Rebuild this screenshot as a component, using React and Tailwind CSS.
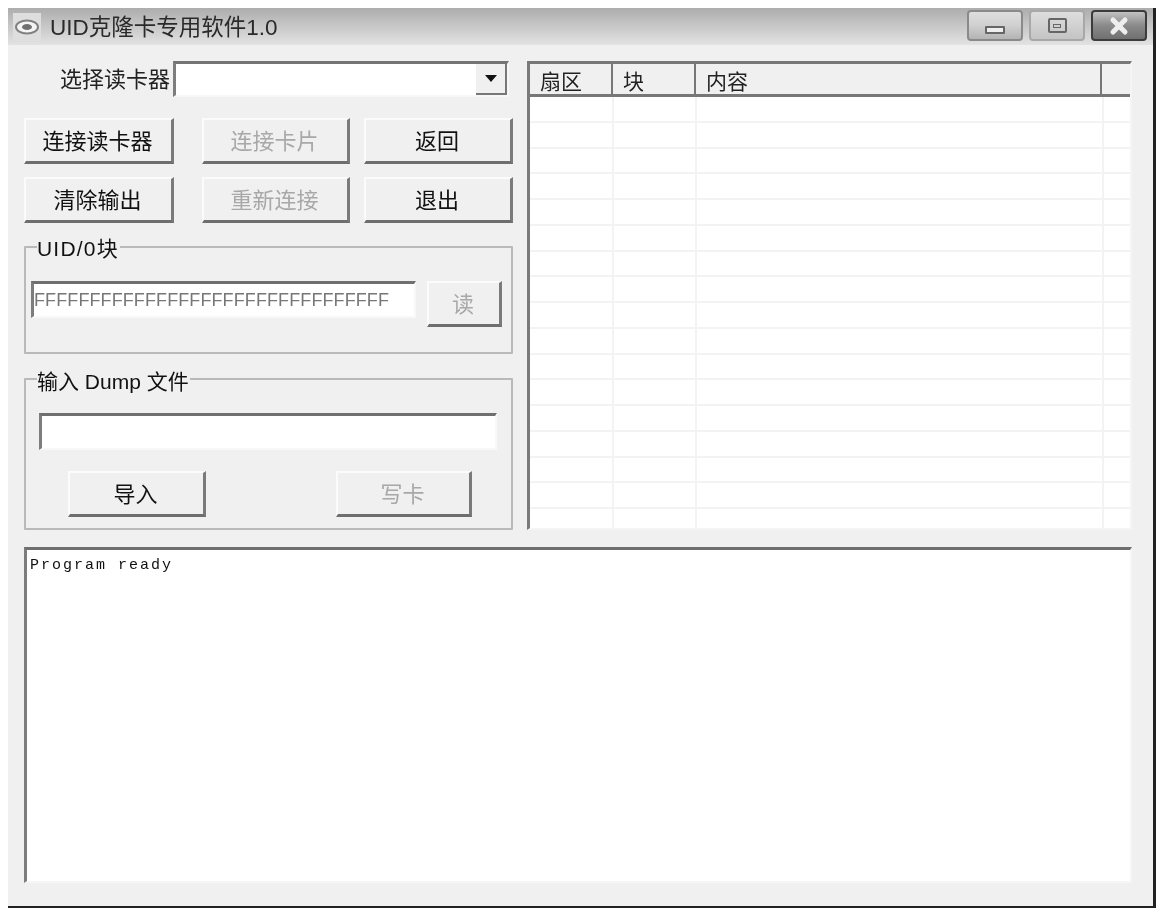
import { X } from 'lucide-react'

const FONT = '"Liberation Sans", "Noto Sans CJK SC", sans-serif'
const ROWS = Array.from({ length: 17 })

function Btn({ w, h = 'h-[46px]', off, children }) {
  return (
    <button className={`${w} ${h} flex items-center justify-center pt-[3px] pr-[2px] bg-[#f0f0f0] border-t-2 border-l-2 border-t-[#fbfbfb] border-l-[#fbfbfb] border-r-[3px] border-b-[3px] border-r-[#7a7a7a] border-b-[#6e6e6e] text-[22px] leading-none ${off ? 'text-[#a8a8a8]' : 'text-[#111]'}`}>
      {children}
    </button>
  )
}

function Group({ title, h, legend, children }) {
  return (
    <div className={`relative ${h} border-2 border-[#b9b9b9] rounded-[1px]`}>
      <span className={`absolute left-[11px] pr-[1px] bg-[#f0f0f0] text-[21px] leading-[26px] text-[#111] whitespace-nowrap ${legend}`}>{title}</span>
      {children}
    </div>
  )
}

function Field({ w, children }) {
  return (
    <div className={`${w} h-[37px] bg-white border-t-[3px] border-l-[3px] border-t-[#6f6f6f] border-l-[#7d7d7d] border-r-2 border-b-2 border-r-[#f8f8f8] border-b-[#f8f8f8] text-[18px] tracking-[0.1px] leading-[32px] text-[#777] whitespace-nowrap overflow-hidden`}>
      {children}
    </div>
  )
}

function Cap({ children, tone }) {
  return (
    <div className={`w-[56px] h-[31px] rounded-[4px] border-2 flex items-center justify-center ${tone}`}>
      {children}
    </div>
  )
}

export default function App() {
  return (
    <div className="w-[1161px] h-[915px] bg-white pl-[8px] pt-[8px]" style={{ fontFamily: FONT }}>
      <div className="w-[1148px] h-[900px] flex flex-col bg-[#f0f0f0] border-r-[3px] border-r-[#222] border-b-[2px] border-b-[#222] blur-[0.4px]">
        {/* title bar */}
        <div className="h-[37px] shrink-0 flex items-center bg-gradient-to-b from-[#adadad] to-[#e3e3e3] pl-[5px] pr-[6px]">
          <svg width="28" height="28" viewBox="0 0 28 28">
            <rect x="0" y="0" width="28" height="28" fill="#dedede" />
            <ellipse cx="14" cy="14" rx="11" ry="6.5" fill="#f4f4f4" stroke="#808080" strokeWidth="2" />
            <ellipse cx="14" cy="14" rx="5" ry="3" fill="#707070" />
          </svg>
          <span className="ml-[9px] pt-[2px] text-[22.5px] text-[#2a2a2a] whitespace-nowrap">UID克隆卡专用软件1.0</span>
          <div className="ml-auto flex gap-[6px] pb-[2px]">
            <Cap tone="border-[#8a8a8a] bg-gradient-to-b from-[#dedede] via-[#d0d0d0] to-[#b4b4b4]">
              <div className="mt-[9px] w-[20px] h-[8px] rounded-[1px] bg-[#eee] border-2 border-[#666]" />
            </Cap>
            <Cap tone="border-[#a8a8a8] bg-gradient-to-b from-[#dedede] to-[#c4c4c4]">
              <div className="w-[19px] h-[15px] border-2 border-[#666] rounded-[2px] flex items-center justify-center"><div className="w-[8px] h-[4px] border border-[#666]" /></div>
            </Cap>
            <Cap tone="border-[#3c3c3c] bg-gradient-to-b from-[#c2c2c2] via-[#8a8a8a] to-[#707070]">
              <X size={24} strokeWidth={5} className="text-[#eee]" />
            </Cap>
          </div>
        </div>

        {/* main */}
        <div className="flex-1 pl-[16px] pt-[16px]">
          <div className="flex">
            <div className="w-[489px] shrink-0">
              {/* reader picker */}
              <div className="flex h-[36px] items-center">
                <span className="w-[149px] pr-[3px] text-right text-[22px] text-[#222] whitespace-nowrap">选择读卡器</span>
                <div className="w-[336px] h-[36px] flex justify-end bg-white border-t-[3px] border-l-[3px] border-t-[#747474] border-l-[#7d7d7d] border-r-2 border-b-2 border-r-[#f7f7f7] border-b-[#f7f7f7]">
                  <div className="w-[31px] flex items-center justify-center bg-[#f0f0f0] border-r-[2px] border-b-[2px] border-r-[#777] border-b-[#777]">
                    <div className="w-0 h-0 border-x-[6px] border-x-transparent border-t-[7px] border-t-[#111]" />
                  </div>
                </div>
              </div>

              {/* buttons */}
              <div className="mt-[21px] grid grid-cols-[150px_148px_149px] gap-y-[13px]">
                <Btn w="w-full">连接读卡器</Btn>
                <Btn w="w-full ml-[28px]" off>连接卡片</Btn>
                <Btn w="w-full ml-[42px]">返回</Btn>
                <Btn w="w-full">清除输出</Btn>
                <Btn w="w-full ml-[28px]" off>重新连接</Btn>
                <Btn w="w-full ml-[42px]">退出</Btn>
              </div>

              {/* uid */}
              <div className="mt-[23px]">
                <Group title="UID/0块" h="h-[108px]" legend="-top-[12px] tracking-[1.2px]">
                  <div className="flex pt-[33px] pl-[5px] gap-[11px]">
                    <Field w="w-[385px]">FFFFFFFFFFFFFFFFFFFFFFFFFFFFFFFF</Field>
                    <Btn w="w-[75px]" off>读</Btn>
                  </div>
                </Group>
              </div>

              {/* dump */}
              <div className="mt-[24px]">
                <Group title="输入 Dump 文件" h="h-[152px]" legend="-top-[11px]">
                  <div className="pt-[33px] pl-[13px]">
                    <Field w="w-[458px]" />
                    <div className="flex mt-[21px] pl-[29px] gap-[130px]">
                      <Btn w="w-[138px]">导入</Btn>
                      <Btn w="w-[136px]" off>写卡</Btn>
                    </div>
                  </div>
                </Group>
              </div>
            </div>

            {/* sector table */}
            <div className="ml-[14px] w-[605px] h-[469px] overflow-hidden bg-white border-l-[3px] border-t-[3px] border-l-[#7a7a7a] border-t-[#777] border-r-2 border-b-2 border-r-[#f5f5f5] border-b-[#f5f5f5]">
              <div className="flex h-[33px] bg-[#f0f0f0] border-b-[3px] border-b-[#777] text-[21px] leading-[36px] text-[#222]">
                <div className="w-[83px] pl-[10px] border-r-2 border-r-[#777]">扇区</div>
                <div className="w-[83px] pl-[10px] border-r-2 border-r-[#777]">块</div>
                <div className="w-[406px] pl-[10px] border-r-2 border-r-[#777]">内容</div>
                <div className="flex-1" />
              </div>
              {ROWS.map((_, i) => (
                <div key={i} className="flex h-[25.75px] border-b-2 border-b-[#f3f3f3]">
                  <div className="w-[84px] border-r-2 border-r-[#f3f3f3]" />
                  <div className="w-[83px] border-r-2 border-r-[#f3f3f3]" />
                  <div className="w-[407px] border-r-2 border-r-[#f3f3f3]" />
                </div>
              ))}
            </div>
          </div>

          {/* log */}
          <div className="mt-[17px] w-[1108px] h-[336px] bg-white border-t-[3px] border-l-[3px] border-t-[#6f6f6f] border-l-[#7d7d7d] border-r-2 border-b-2 border-r-[#f6f6f6] border-b-[#f6f6f6] pl-[3px] pt-[6px]">
            <span className="block text-[15px] leading-[20px] tracking-[2px] text-[#111]" style={{ fontFamily: '"Liberation Mono", monospace' }}>Program ready</span>
          </div>
        </div>
      </div>
    </div>
  )
}
